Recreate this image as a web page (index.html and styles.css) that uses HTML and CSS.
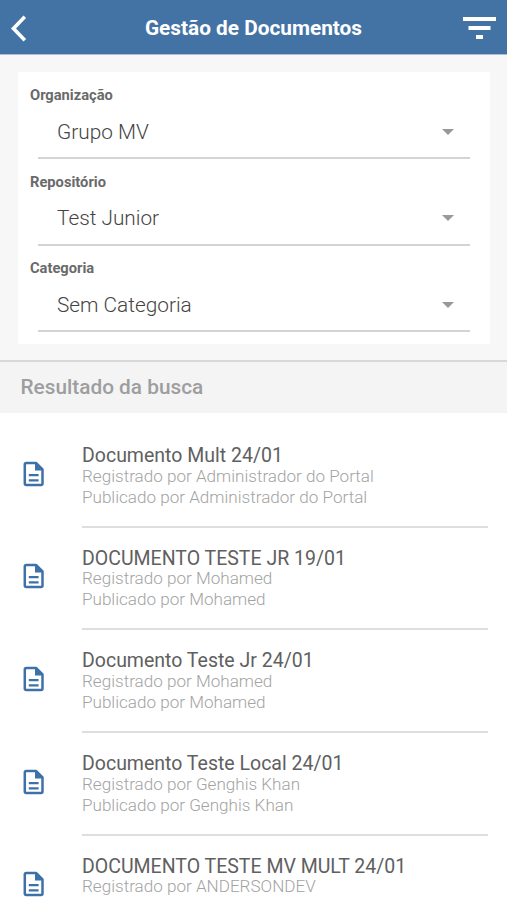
FILE: index.html
```html
<!DOCTYPE html>
<html lang="pt-BR">
<head>
    <meta charset="UTF-8">
    <meta name="viewport" content="width=device-width, initial-scale=1.0">
    <title>Gestão de Documentos</title>
    <link rel="stylesheet" href="styles.css">
</head>
<body>
    <svg width="0" height="0" class="defs">
        <symbol id="doc" viewBox="0 0 22 26">
            <path d="M3.3 2H13l6.500 6.500v14a1.500 1.500 0 0 1-1.500 1.500H3.300A1.500 1.500 0 0 1 1.800 22.500V3.500A1.500 1.500 0 0 1 3.300 2z" fill="none" stroke="#3d71a8" stroke-width="2.500" stroke-linejoin="round"/>
            <path d="M12 2v7.400h8z" fill="#3d71a8"/>
            <path d="M5.800 14.200h9.800M5.800 19.300h9.800" stroke="#3d71a8" stroke-width="2.200"/>
        </symbol>
    </svg>

    <header class="topbar">
        <svg class="back" width="16" height="27" viewBox="0 0 16 27"><path d="M13.800 1.800L2.500 13.500l11.300 11.700" fill="none" stroke="#fff" stroke-width="3.600"/></svg>
        <h1 class="title">Gestão de Documentos</h1>
        <svg class="filter" width="33" height="22" viewBox="0 0 33 22"><path d="M0 0h33v4H0zM5.500 9h22v4h-22zM13 18h7v4h-7z" fill="#fff"/></svg>
    </header>

    <section class="search">
        <div class="panel">
            <div class="field">
                <div class="label">Organização</div>
                <div class="select"><span>Grupo MV</span><i class="arrow"></i></div>
            </div>
            <div class="field">
                <div class="label">Repositório</div>
                <div class="select"><span>Test Junior</span><i class="arrow"></i></div>
            </div>
            <div class="field">
                <div class="label">Categoria</div>
                <div class="select"><span>Sem Categoria</span><i class="arrow"></i></div>
            </div>
        </div>
    </section>

    <h2 class="result">Resultado da busca</h2>

    <div class="list">
        <div class="item">
            <svg class="icon"><use href="#doc"/></svg>
            <div class="info">
                <div class="name">Documento Mult 24/01</div>
                <div class="sub">Registrado por Administrador do Portal</div>
                <div class="sub">Publicado por Administrador do Portal</div>
            </div>
        </div>
        <div class="item">
            <svg class="icon"><use href="#doc"/></svg>
            <div class="info">
                <div class="name">DOCUMENTO TESTE JR 19/01</div>
                <div class="sub">Registrado por Mohamed</div>
                <div class="sub">Publicado por Mohamed</div>
            </div>
        </div>
        <div class="item">
            <svg class="icon"><use href="#doc"/></svg>
            <div class="info">
                <div class="name">Documento Teste Jr 24/01</div>
                <div class="sub">Registrado por Mohamed</div>
                <div class="sub">Publicado por Mohamed</div>
            </div>
        </div>
        <div class="item">
            <svg class="icon"><use href="#doc"/></svg>
            <div class="info">
                <div class="name">Documento Teste Local 24/01</div>
                <div class="sub">Registrado por Genghis Khan</div>
                <div class="sub">Publicado por Genghis Khan</div>
            </div>
        </div>
        <div class="item">
            <svg class="icon"><use href="#doc"/></svg>
            <div class="info">
                <div class="name">DOCUMENTO TESTE MV MULT 24/01</div>
                <div class="sub">Registrado por ANDERSONDEV</div>
            </div>
        </div>
    </div>
</body>
</html>
```
FILE: styles.css
```css
*{
    margin: 0;
    padding: 0;
    box-sizing: border-box;
}
body{
    height: 900px;
    overflow: hidden;
    background: #fff;
    font-family: Roboto, sans-serif;
}
.defs{
    display: block;
}
.topbar{
    display: flex;
    align-items: center;
    height: 54px;
    padding: 2px 11px 0 11px;
    background: #4373a5;
}
.title{
    flex: 1;
    padding-left: 17px;
    text-align: center;
    color: #fff;
    font-size: 20.800px;
    font-weight: 700;
}
.search{
    height: 306px;
    padding: 18px 17px 0 18px;
    border-top: 1px solid #a9bfd6;
    background: #f7f7f7;
}
.panel{
    height: 272px;
    margin-top: -1px;
    padding: 12px 20px 0 12px;
    background: #fff;
}
.field{
    height: 86.700px;
}
.label{
    height: 22px;
    line-height: 22px;
    color: #6a6a6a;
    font-size: 14.700px;
    font-weight: 700;
}
.select{
    display: flex;
    justify-content: space-between;
    align-items: center;
    height: 53px;
    margin-left: 8px;
    padding: 0 16px 0 19px;
    border-bottom: 2px solid #d4d4d4;
    color: #444;
    font-size: 20.800px;
    font-weight: 300;
}
.arrow{
    border: 6px solid transparent;
    border-top-color: #999;
    border-bottom: 0;
}
.result{
    height: 53px;
    padding-left: 20.500px;
    border-top: 2px solid #d8d8d8;
    background: #f4f4f4;
    color: #9e9e9e;
    font-size: 20.800px;
    font-weight: 500;
    line-height: 50px;
}
.list{
    padding: 12px 19px 0 23px;
}
.item{
    display: flex;
    height: 102.670px;
}
.icon{
    width: 22px;
    height: 26px;
    margin: 35.600px 37px 0 0;
}
.info{
    flex: 1;
    padding-top: 18px;
    border-bottom: 2px solid #dedede;
}
.name{
    height: 22.800px;
    color: #606060;
    font-size: 19.500px;
    line-height: 25.400px;
}
.sub{
    height: 20.800px;
    color: #a3a3a3;
    font-size: 17.080px;
    font-weight: 300;
    line-height: 21px;
}
```
